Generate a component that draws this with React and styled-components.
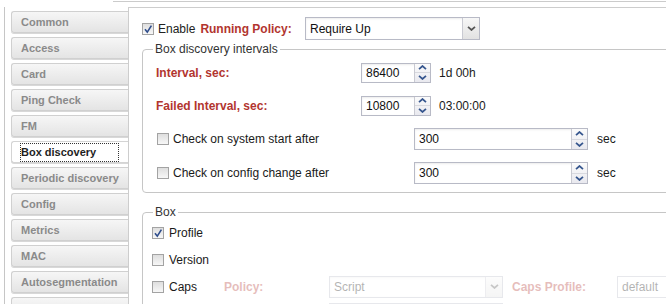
import React from "react";
import styled, { createGlobalStyle } from "styled-components";

const GlobalStyle = createGlobalStyle`
  html, body {
    margin: 0;
    padding: 0;
    background: #ffffff;
  }
  body {
    font-family: "Liberation Sans", Arial, sans-serif;
    font-size: 12px;
    color: #222222;
  }
`;

// last entry is the tab cut off by the window bottom
const tabs = [
  "Common",
  "Access",
  "Card",
  "Ping Check",
  "FM",
  "Box discovery",
  "Periodic discovery",
  "Config",
  "Metrics",
  "MAC",
  "Autosegmentation",
  "",
];

function ChevronUp() {
  return (
    <svg width="9" height="5" viewBox="0 0 9 5">
      <polyline points="1,4.2 4.5,1 8,4.2" fill="none" stroke="#36568e" strokeWidth="1.7" />
    </svg>
  );
}

function ChevronDown({ color = "#36568e" }) {
  return (
    <svg width="9" height="5" viewBox="0 0 9 5">
      <polyline points="1,0.8 4.5,4 8,0.8" fill="none" stroke={color} strokeWidth="1.7" />
    </svg>
  );
}

function Check({ checked }) {
  return (
    <CheckBox>
      {checked && (
        <svg width="10" height="10" viewBox="0 0 10 10">
          <path d="M2 5.2 L4.3 8.2 L8.4 1.6" fill="none" stroke="#2f4d8c" strokeWidth="1.6" />
        </svg>
      )}
    </CheckBox>
  );
}

function Spinner({ value, width, height }) {
  return (
    <SpinBox $width={width} $height={height}>
      <SpinText>{value}</SpinText>
      <SpinButtons>
        <SpinHalf>
          <ChevronUp />
        </SpinHalf>
        <SpinHalf>
          <ChevronDown />
        </SpinHalf>
      </SpinButtons>
    </SpinBox>
  );
}

function Select({ value, width, disabled }) {
  return (
    <SelectBox $width={width} $disabled={disabled}>
      <SelectText>{value}</SelectText>
      <Trigger>
        <ChevronDown color="#555" />
      </Trigger>
    </SelectBox>
  );
}

export default function App() {
  return (
    <>
      <GlobalStyle />
      <Page>
        <TopRule />
        <Body>
          <Nav>
            {tabs.map((t, i) => (
              <Tab key={i} $active={t === "Box discovery"}>
                <TabLabel $active={t === "Box discovery"}>{t}</TabLabel>
              </Tab>
            ))}
          </Nav>
          <Content>
            <TopRow>
              <LabelGroup>
                <Check checked />
                <span>Enable</span>
                <RedLabel $gap={5}>Running Policy:</RedLabel>
              </LabelGroup>
              <Select value="Require Up" width={175} />
            </TopRow>

            <Fieldset>
              <Legend>Box discovery intervals</Legend>
              <Stack $pad={13}>
                <Row $h={33}>
                  <RedLabel $width={205}>Interval, sec:</RedLabel>
                  <Spinner value="86400" width={70} height={20} />
                  <Suffix>1d 00h</Suffix>
                </Row>
                <Row $h={33}>
                  <RedLabel $width={205}>Failed Interval, sec:</RedLabel>
                  <Spinner value="10800" width={70} height={20} />
                  <Suffix>03:00:00</Suffix>
                </Row>
                <Row $h={34}>
                  <CheckLabel $width={258} $gap={4} $indent={1}>
                    <Check />
                    <span>Check on system start after</span>
                  </CheckLabel>
                  <Spinner value="300" width={174} height={22} />
                  <Suffix $gap={9}>sec</Suffix>
                </Row>
                <Row $h={34}>
                  <CheckLabel $width={258} $gap={4} $indent={1}>
                    <Check />
                    <span>Check on config change after</span>
                  </CheckLabel>
                  <Spinner value="300" width={174} height={22} />
                  <Suffix $gap={9}>sec</Suffix>
                </Row>
              </Stack>
            </Fieldset>

            <Fieldset $top={12}>
              <Legend>Box</Legend>
              <Stack $pad={9} $bottom={0}>
                <Row $h={27}>
                  <CheckLabel $gap={5}>
                    <Check checked />
                    <span>Profile</span>
                  </CheckLabel>
                </Row>
                <Row $h={27}>
                  <CheckLabel $gap={5}>
                    <Check />
                    <span>Version</span>
                  </CheckLabel>
                </Row>
                <Row $h={27}>
                  <CheckLabel $width={72} $gap={5}>
                    <Check />
                    <span>Caps</span>
                  </CheckLabel>
                  <Faded>
                    <RedLabel $width={105}>Policy:</RedLabel>
                    <Select value="Script" width={174} disabled />
                    <RedLabel $width={105} $gap={9}>Caps Profile:</RedLabel>
                    <PlainInput>default</PlainInput>
                  </Faded>
                </Row>
                <Row $h={27}>
                  <Spacer $width={177} />
                  <Faded>
                    <Select value="" width={174} disabled />
                  </Faded>
                </Row>
              </Stack>
            </Fieldset>
          </Content>
        </Body>
      </Page>
    </>
  );
}

const Page = styled.div`
  width: 666px;
  height: 304px;
  overflow: hidden;
  background: #ffffff;
`;

const TopRule = styled.div`
  margin: 1px 0 0 113px;
  height: 5px;
  border-top: 1px solid #cbcbcb;
`;

const Body = styled.div`
  display: flex;
  height: 297px;
`;

const Nav = styled.div`
  flex-shrink: 0;
  margin-left: 4px;
  width: 117px;
  padding: 4px 0 0 6px;
  border-left: 1px solid #c6c6c6;
  border-right: 1px solid #cdcdcd;
  display: flex;
  flex-direction: column;
  gap: 4px;
`;

const Tab = styled.div`
  flex-shrink: 0;
  height: 20px;
  border: 1px solid ${(p) => (p.$active ? "#d4d4d4" : "#d0d0d0")};
  border-right: none;
  border-radius: 3px 0 0 3px;
  background: ${(p) => (p.$active ? "#ffffff" : "linear-gradient(#f6f6f6, #e4e4e4)")};
  box-shadow: 0 1px 0 #d8d8d8;
  display: flex;
  align-items: center;
  padding-left: 8px;
  font-size: 11px;
  font-weight: bold;
  color: ${(p) => (p.$active ? "#1e1e1e" : "#8a8a8a")};
  white-space: nowrap;
`;

const TabLabel = styled.span`
  display: flex;
  align-items: center;
  height: 17px;
  width: 97px;
  border: 1px dotted ${(p) => (p.$active ? "#333" : "transparent")};
`;

const Content = styled.div`
  flex: 1;
  min-width: 0;
  border-top: 1px solid #cdcdcd;
  padding: 9px 0 0 13px;
`;

const TopRow = styled.div`
  display: flex;
  align-items: center;
  height: 23px;
`;

const LabelGroup = styled.div`
  display: flex;
  align-items: center;
  width: 163px;
  flex-shrink: 0;
  white-space: nowrap;
`;

const CheckBox = styled.span`
  box-sizing: border-box;
  width: 12px;
  height: 12px;
  flex-shrink: 0;
  margin-right: 4px;
  border: 1px solid #a3a3a3;
  background: linear-gradient(#dedede, #f7f7f7);
  display: flex;
  align-items: center;
  justify-content: center;
`;

const RedLabel = styled.span`
  flex-shrink: 0;
  width: ${(p) => (p.$width ? `${p.$width}px` : "auto")};
  margin-left: ${(p) => p.$gap || 0}px;
  color: #b2352f;
  font-weight: bold;
  white-space: nowrap;
`;

const SelectBox = styled.div`
  box-sizing: border-box;
  flex-shrink: 0;
  width: ${(p) => p.$width}px;
  height: ${(p) => (p.$disabled ? 22 : 23)}px;
  display: flex;
  border: 1px solid #b8bac6;
  background: #ffffff;
  box-shadow: inset 0 1px 2px rgba(0, 0, 0, 0.08);
`;

const SelectText = styled.span`
  flex: 1;
  display: flex;
  align-items: center;
  padding-left: 4px;
  color: #111;
`;

const Trigger = styled.span`
  width: 16px;
  border-left: 1px solid #c9cad2;
  background: linear-gradient(#f7f7f7, #e2e2e2);
  display: flex;
  align-items: center;
  justify-content: center;
`;

const Fieldset = styled.fieldset`
  box-sizing: border-box;
  width: 620px;
  margin: ${(p) => p.$top || 2}px 0 0 0;
  padding: 0;
  border: 1px solid #c6c6c6;
  border-radius: 4px;
`;

const Legend = styled.legend`
  margin-left: 10px;
  padding: 0 2px;
  line-height: 14px;
  color: #333;
`;

const Stack = styled.div`
  display: flex;
  flex-direction: column;
  padding: 0 0 ${(p) => (p.$bottom === undefined ? 2 : p.$bottom)}px ${(p) => p.$pad}px;
`;

const Row = styled.div`
  display: flex;
  align-items: center;
  height: ${(p) => p.$h}px;
  flex-shrink: 0;
`;

const CheckLabel = styled.label`
  display: flex;
  align-items: center;
  flex-shrink: 0;
  width: ${(p) => (p.$width ? `${p.$width}px` : "auto")};
  padding-left: ${(p) => p.$indent || 0}px;
  box-sizing: border-box;
  white-space: nowrap;
  color: #1a1a1a;

  & > span:first-child {
    margin-right: ${(p) => p.$gap}px;
  }
`;

const SpinBox = styled.div`
  box-sizing: border-box;
  flex-shrink: 0;
  width: ${(p) => p.$width}px;
  height: ${(p) => p.$height}px;
  display: flex;
  border: 1px solid #b8bac6;
  background: #ffffff;
  box-shadow: inset 0 1px 2px rgba(0, 0, 0, 0.08);
`;

const SpinText = styled.span`
  flex: 1;
  display: flex;
  align-items: center;
  padding-left: 4px;
  color: #111;
`;

const SpinButtons = styled.span`
  width: 15px;
  display: flex;
  flex-direction: column;
  border-left: 1px solid #c9cad2;
  background: linear-gradient(#fbfbfb, #e9e9ef);
`;

const SpinHalf = styled.span`
  flex: 1;
  display: flex;
  align-items: center;
  justify-content: center;

  & + & {
    border-top: 1px solid #d8d9df;
  }
`;

const Suffix = styled.span`
  margin-left: ${(p) => p.$gap || 8}px;
  color: #1a1a1a;
  white-space: nowrap;
`;

const Faded = styled.div`
  display: flex;
  align-items: center;
  opacity: 0.32;
`;

const Spacer = styled.span`
  flex-shrink: 0;
  width: ${(p) => p.$width}px;
`;

const PlainInput = styled.span`
  box-sizing: border-box;
  flex-shrink: 0;
  width: 80px;
  height: 22px;
  display: flex;
  align-items: center;
  padding-left: 4px;
  border: 1px solid #b8bac6;
  color: #111;
`;
